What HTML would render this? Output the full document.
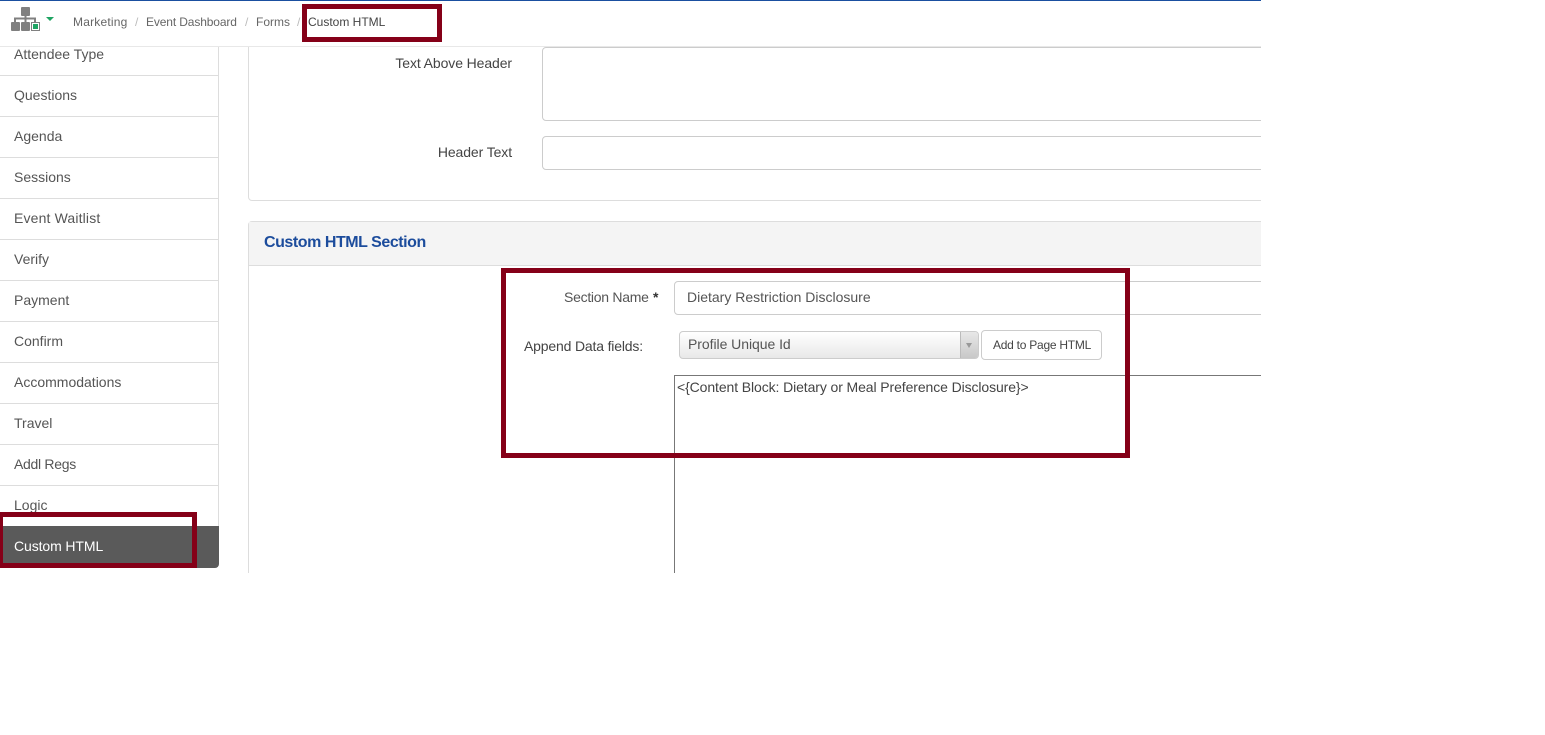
<!DOCTYPE html>
<html><head><meta charset="utf-8"><style>
html,body{margin:0;padding:0;background:#fff}
body{width:1545px;height:735px;overflow:hidden;position:relative;font-family:"Liberation Sans",sans-serif;font-size:14px;color:#555}
#app{position:absolute;left:0;top:0;width:1261px;height:573px;overflow:hidden;background:#fff}
.a{position:absolute}
.t{position:absolute;white-space:nowrap;line-height:18px}
.nav{position:absolute;left:14px;white-space:nowrap;line-height:18px;color:#555;font-size:14px}
.sep{position:absolute;left:0;width:218px;height:1px;background:#ddd}
.box{position:absolute;box-sizing:border-box;border:1px solid #ccc;background:#fff;border-radius:4px}
.red{position:absolute;box-sizing:border-box;border:5px solid #850018}
.bc{position:absolute;top:14px;font-size:12px;line-height:16px;color:#666;white-space:nowrap}
.sl{color:#bbb}
</style></head><body>
<div id="app">

<div class="a" style="left:218px;top:47px;width:1px;height:480px;background:#ddd"></div>
<div class="nav" style="top:45px">Attendee Type</div>
<div class="sep" style="top:75px"></div>
<div class="nav" style="top:86px">Questions</div>
<div class="sep" style="top:116px"></div>
<div class="nav" style="top:127px">Agenda</div>
<div class="sep" style="top:157px"></div>
<div class="nav" style="top:168px">Sessions</div>
<div class="sep" style="top:198px"></div>
<div class="nav" style="top:209px;letter-spacing:.15px">Event Waitlist</div>
<div class="sep" style="top:239px"></div>
<div class="nav" style="top:250px">Verify</div>
<div class="sep" style="top:280px"></div>
<div class="nav" style="top:291px">Payment</div>
<div class="sep" style="top:321px"></div>
<div class="nav" style="top:332px">Confirm</div>
<div class="sep" style="top:362px"></div>
<div class="nav" style="top:373px">Accommodations</div>
<div class="sep" style="top:403px"></div>
<div class="nav" style="top:414px">Travel</div>
<div class="sep" style="top:444px"></div>
<div class="nav" style="top:455px;letter-spacing:-.3px">Addl Regs</div>
<div class="sep" style="top:485px"></div>
<div class="nav" style="top:496px">Logic</div>
<div class="a" style="left:0;top:526px;width:219px;height:42px;background:#5a5a5a;border-radius:0 0 4px 0"></div>
<div class="nav" style="top:537px;color:#fff;letter-spacing:-.1px">Custom HTML</div>

<div class="box" style="left:248px;top:20px;width:1100px;height:181px;border-color:#ddd"></div>
<div class="t" style="right:749px;top:54px;color:#444;letter-spacing:-.1px">Text Above Header</div>
<div class="box" style="left:542px;top:47px;width:800px;height:74px"></div>
<div class="t" style="right:749px;top:143px;color:#444;letter-spacing:-.1px">Header Text</div>
<div class="box" style="left:542px;top:136px;width:800px;height:34px"></div>

<div class="a" style="left:248px;top:221px;width:1100px;height:400px;box-sizing:border-box;border:1px solid #ddd;border-radius:4px 4px 0 0"></div>
<div class="a" style="left:249px;top:222px;width:1012px;height:43px;background:#f4f4f4;border-bottom:1px solid #ddd"></div>
<div class="t" style="left:264px;top:234px;font-size:16px;font-weight:bold;color:#1c4c9c;letter-spacing:-.45px">Custom HTML Section</div>

<div class="t" style="left:564px;top:288px;font-size:14px;letter-spacing:-.27px">Section Name</div>
<div class="t" style="left:653px;top:288px;font-size:14px;font-weight:bold;color:#333">*</div>
<div class="box" style="left:674px;top:281px;width:800px;height:34px"></div>
<div class="t" style="left:687px;top:288px;color:#555">Dietary Restriction Disclosure</div>

<div class="t" style="left:524px;top:337px;color:#444;letter-spacing:-.17px">Append Data fields:</div>
<div class="a" style="left:679px;top:331px;width:300px;height:28px;box-sizing:border-box;border:1px solid #ccc;border-radius:4px;background:linear-gradient(#fff,#e8e8e8)"></div>
<div class="a" style="left:960px;top:332px;width:18px;height:26px;box-sizing:border-box;border-left:1px solid #bbb;background:linear-gradient(#e8e8e8,#c8c8c8);border-radius:0 3px 3px 0"></div>
<div class="a" style="left:966px;top:343px;width:0;height:0;border-left:3px solid transparent;border-right:3px solid transparent;border-top:5px solid #999"></div>
<div class="t" style="left:688px;top:335px;color:#555;letter-spacing:-.05px">Profile Unique Id</div>
<div class="box" style="left:981px;top:330px;width:121px;height:30px;border-color:#ccc"></div>
<div class="t" style="left:993px;top:336px;font-size:12px;color:#444;letter-spacing:-.25px">Add to Page HTML</div>

<div class="a" style="left:674px;top:375px;width:800px;height:300px;box-sizing:border-box;border:1px solid #777"></div>
<div class="t" style="left:677px;top:378px;color:#444;letter-spacing:-.1px">&lt;{Content Block: Dietary or Meal Preference Disclosure}&gt;</div>

<div class="a" style="left:0;top:0;width:1261px;height:46px;background:#fff"></div>
<div class="a" style="left:0;top:0;width:1261px;height:1px;background:#1a4fa0"></div>
<div class="a" style="left:0;top:46px;width:1261px;height:1px;background:#e8e8e8"></div>

<svg class="a" style="left:0;top:0" width="60" height="36" viewBox="0 0 60 36">
<rect x="21" y="7" width="9" height="9" rx="1" fill="#808080"/>
<path d="M25.5 15V23M15 23V18.5H35V23" stroke="#808080" fill="none" stroke-width="2"/>
<rect x="11" y="22" width="9" height="9" rx="1" fill="#808080"/>
<rect x="21" y="22" width="9" height="9" rx="1" fill="#808080"/>
<rect x="31.5" y="22.5" width="8" height="8" fill="#fff" stroke="#808080"/>
<rect x="33" y="24" width="5" height="5" fill="#1fa463"/>
<path d="M46 17H54L50 21Z" fill="#1fa463"/>
</svg>

<div class="bc" style="left:73px;letter-spacing:.2px">Marketing</div>
<div class="bc sl" style="left:135px">/</div>
<div class="bc" style="left:146px;letter-spacing:-.13px">Event Dashboard</div>
<div class="bc sl" style="left:245px">/</div>
<div class="bc" style="left:256px">Forms</div>
<div class="bc sl" style="left:297px">/</div>
<div class="bc" style="left:308px;color:#444">Custom HTML</div>

<div class="red" style="left:302px;top:4px;width:140px;height:38px"></div>
<div class="red" style="left:0;top:512px;width:197px;height:56px;border-left-width:3px"></div>
<div class="red" style="left:501px;top:268px;width:629px;height:190px"></div>
</div>
</body></html>
